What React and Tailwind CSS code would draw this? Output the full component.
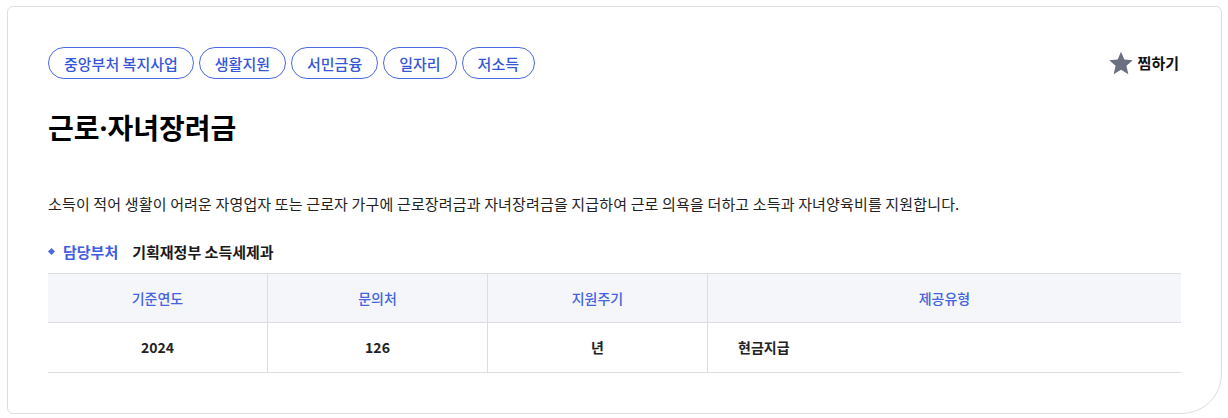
import React from 'react';

const tags = ['중앙부처 복지사업', '생활지원', '서민금융', '일자리', '저소득'];

const columns = [
  { label: '기준연도', value: '2024', align: 'center' },
  { label: '문의처', value: '126', align: 'center' },
  { label: '지원주기', value: '년', align: 'center' },
  { label: '제공유형', value: '현금지급', align: 'left' },
];

const StarIcon = () => (
  <svg className="w-[26px] h-[26px]" viewBox="0 0 24 24" fill="#6b6f82">
    <path d="M12 1.5l3.1 7.2 7.8.7-5.9 5.2 1.8 7.7L12 18.2l-6.8 4.1 1.8-7.7L1.1 9.4l7.8-.7z" />
  </svg>
);

const App = () => {
  return (
    <div className="min-h-[418px] bg-white pl-[7px] pt-[6px] font-['Noto_Sans_CJK_KR','Noto_Sans',sans-serif]">
      <div className="w-[1215px] border border-[#dedede] rounded-tl-[6px] rounded-tr-[6px] rounded-bl-[6px] rounded-br-[40px] px-10 pt-10 pb-10">
        {/* Tags + bookmark */}
        <div className="flex items-center justify-between">
          <div className="flex gap-[5px]">
            {tags.map((tag) => (
              <span
                key={tag}
                className="h-8 px-[15px] flex items-center rounded-full border border-[#4b69e2] text-[15px] font-medium text-[#3556d8] leading-none"
              >
                {tag}
              </span>
            ))}
          </div>
          <button className="flex items-center gap-[4px] pr-[2px] text-[15px] font-bold text-[#111]">
            <StarIcon />
            <span>찜하기</span>
          </button>
        </div>

        <h1 className="mt-[29px] text-[28px] leading-[39px] font-bold text-black">
          근로<span className="font-['Noto_Sans',sans-serif]">·</span>자녀장려금
        </h1>

        <p className="mt-[45px] text-[15px] leading-[21px] tracking-[0.15px] text-[#222]">
          소득이 적어 생활이 어려운 자영업자 또는 근로자 가구에 근로장려금과 자녀장려금을 지급하여 근로 의욕을 더하고 소득과 자녀양육비를 지원합니다.
        </p>

        <div className="mt-[27px] flex items-center text-[15px] leading-[21px] font-bold">
          <span className="w-[5px] h-[5px] bg-[#4b69e2] rotate-45 ml-[1px] mr-[9px]" />
          <span className="text-[#3f5de0]">담당부처</span>
          <span className="ml-[14px] text-[#1a1a1a]">기획재정부 소득세제과</span>
        </div>

        {/* Info table */}
        <div className="mt-[11px] grid grid-cols-[220px_220px_220px_1fr] border-t border-b border-[#dddddd] text-[14px]">
          {columns.map((col, i) => (
            <div
              key={col.label}
              className={`h-[49px] flex items-center justify-center bg-[#f5f6fa] border-b border-[#dddddd] font-medium text-[#4463e0] ${i < 3 ? 'border-r' : ''}`}
            >
              {col.label}
            </div>
          ))}
          {columns.map((col, i) => (
            <div
              key={col.value}
              className={`h-[49px] flex items-center font-bold text-[#222] border-[#dddddd] ${col.align === 'center' ? 'justify-center' : 'pl-[30px]'} ${i < 3 ? 'border-r' : ''}`}
            >
              {col.value}
            </div>
          ))}
        </div>
      </div>
    </div>
  );
};

export default App;
